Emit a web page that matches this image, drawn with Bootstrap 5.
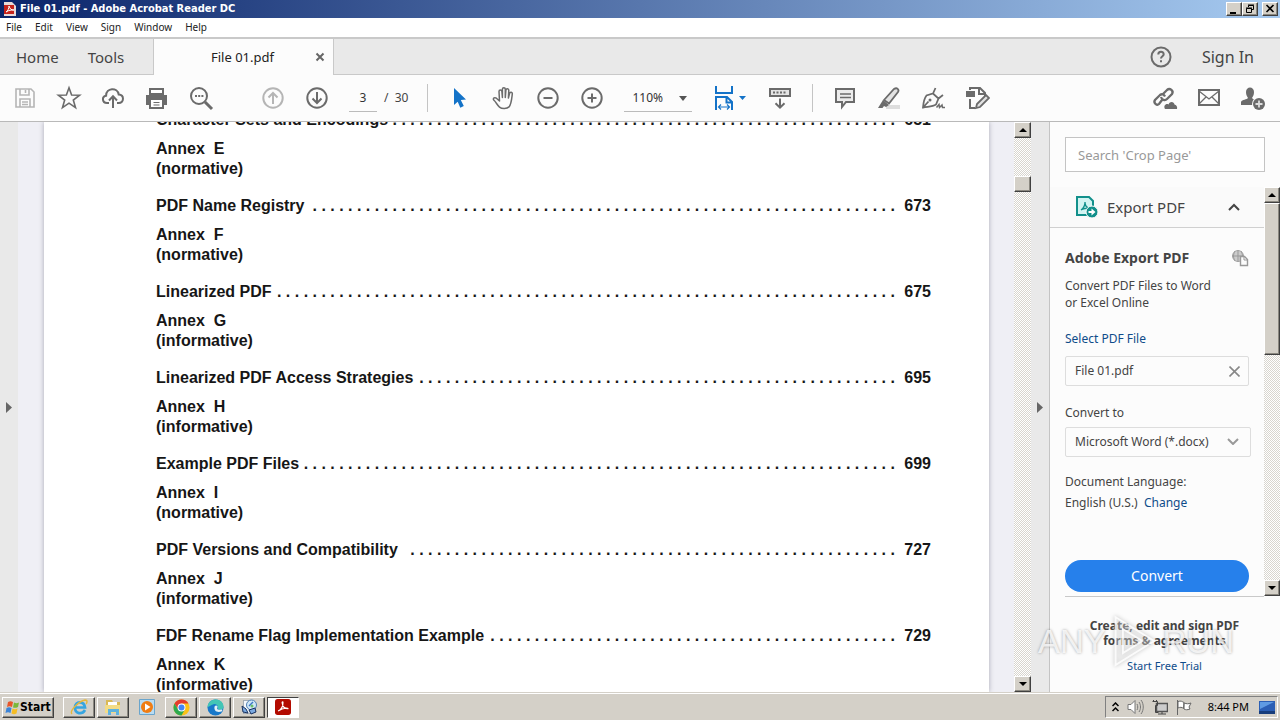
<!DOCTYPE html>
<html lang="en">
<head>
<meta charset="utf-8">
<meta name="viewport" content="width=device-width, initial-scale=1">
<title>File 01.pdf - Adobe Acrobat Reader DC</title>
<link rel="stylesheet" href="https://cdn.jsdelivr.net/npm/bootstrap@5.3.0/dist/css/bootstrap.min.css">
<style>
  body { font-family: "Noto Sans", sans-serif; font-size: 12px; line-height: 18px; color: #444; background: #fcfcfc; }
  button { border: 0; background: none; padding: 0; color: inherit; }
  a { text-decoration: none; color: #0f4c8a; }
  svg { display: block; }
  .ic { width: 26px; height: 26px; fill: none; stroke: #6b6b6b; stroke-width: 2; }
  .ic-dim { stroke: #b5b5b5; }

  .title-bar { height: 18px; padding: 0 2px 0 4px; background: linear-gradient(90deg, #0a246a, #a6caf0); color: #fff; font: bold 11px/18px "DejaVu Sans Condensed", sans-serif; }
  .raised { background: #d4d0c8; border: 1px solid; border-color: #fff #404040 #404040 #fff; box-shadow: inset -1px -1px #8b8880; }
  .win-btn { width: 16px; height: 14px; color: #000; }
  .menu-bar { height: 19px; padding-left: 6px; gap: 13px; font-size: 10px; line-height: 19px; }
  .menu-bar a { color: #222; }

  .tab-bar { height: 38px; background: #e9e9e9; border-top: 2px solid #c9c9c9; border-bottom: 1px solid #c9c9c9; font-size: 15px; }
  .tab-home { width: 154px; padding-left: 16px; gap: 29px; border-right: 1px solid #c9c9c9; }
  .tab-file { width: 179px; margin-bottom: -1px; padding: 0 8px 0 24px; background: #fcfcfc; font-size: 13px; color: #222; }
  .tab-edge { border-left: 1px solid #c9c9c9; }
  .sign { padding: 0 26px 0 19px; font-size: 16px; }

  .tool-bar { height: 47px; padding: 0 5px 0 3px; border-bottom: 1px solid #b9b9b9; }
  .tool { width: 44px; height: 36px; display: flex; align-items: center; justify-content: center; flex: none; }
  .group-gap { margin-left: 28px; }
  .mode-gap { margin-left: 6px; }
  .sep { width: 1px; height: 28px; margin: 0 10px; background: #c4c4c4; }
  .sep-wide { margin-left: 19px; }
  .under { border: 0; border-bottom: 1px solid #bbb; background: none; height: 27px; font-size: 12px; color: #333; padding: 0; border-radius: 0; }
  .page-no { width: 28px; margin: 0 7px 0 10px; text-align: center; }
  .zoom-pick { width: 68px; margin: 0 16px 0 10px; position: relative; }
  .zoom-pick select { width: 100%; padding-left: 8px; appearance: none; }
  .zoom-pick svg, .fmt svg { position: absolute; pointer-events: none; }
  .zoom-pick svg { right: 5px; top: 11px; }

  .strip { width: 18px; background: #e9e9e9; display: flex; align-items: center; justify-content: center; flex: none; }
  .canvas { background: #efeff5; padding: 0 25px 0 26px; }
  .sheet { background: #fff; padding: 0 58px 0 112px; box-shadow: 0 0 5px #a9a9b5; font: bold 16px/20px "Liberation Sans", Arial, sans-serif; color: #161616; }
  .toc { margin: -12px 0 0; padding: 0; list-style: none; height: 0; white-space: pre; }
  .toc li { margin-bottom: 17px; }
  .toc-line { display: flex; margin-bottom: 9px; }
  .dots { flex: 1; text-align: right; margin-right: 5px; overflow: hidden; }
  .scroller { flex: none; width: 16px; display: flex; flex-direction: column; background: repeating-conic-gradient(#d8d5ce 0 25%, #fff 0 50%) 0 0/2px 2px; }
  .scroller.doc { width: 17px; }
  .scroller button { height: 16px; display: flex; align-items: center; justify-content: center; }
  .thumb-sm { height: 16px; margin-top: 38px; }
  .thumb-lg { height: 152px; }

  .side { width: 231px; flex: none; border-left: 1px solid #c4c4c4; background: #fcfcfc; position: relative; }
  .search { margin: 15px; height: 35px; border: 1px solid #c4c4c4; border-radius: 0; padding: 0 12px; font-size: 13px; background: #fff; }
  .search::placeholder { color: #999; }
  .side-body { height: 409px; flex: none; }
  .side-main { width: 214px; flex: none; }
  .export-head { height: 41px; border-bottom: 1px solid #d0d0d0; padding: 0 24px 0 25px; font-size: 15px; background: #fafafa; }
  .export-form { padding: 20px 15px 4px; }
  .export-form h2 { font-size: 14px; line-height: 20px; font-weight: 700; margin: 0; }
  .desc { margin: 9px 0 19px; line-height: 17px; }
  .to-label { margin: 18px 0 5px; }
  .lang { margin-top: 14px; line-height: 21px; }
  .box { height: 30px; border: 1px solid #ddd; border-radius: 2px; background: #fcfcfc; font-size: 12px; padding: 0 8px 0 9px; flex: none; }
  .fmt { position: relative; margin-right: -2px; }
  .fmt select { appearance: none; width: 100%; color: #444; }
  .fmt svg { right: 12px; top: 11px; }
  .convert { height: 32px; background: #2680eb; color: #fff; border-radius: 16px; font-size: 14px; flex: none; }
  .promo { margin: 0 16px 0 15px; border-top: 1px solid #c9c9c9; padding-top: 21px; line-height: 15px; text-align: center; flex: 1; }
  .promo a { display: block; margin-top: 10px; font-size: 11px; }
  .wmark { position: absolute; left: -12px; bottom: 18px; width: 196px; pointer-events: none; color: rgba(255,255,255,.8); font: 33px/64px "Liberation Sans", sans-serif; text-shadow: 0 0 3px rgba(0,0,0,.35); }
  .wmark svg { flex: none; filter: drop-shadow(0 0 2px rgba(0,0,0,.3)); }

  .task-bar { height: 28px; background: #d4d0c8; box-shadow: inset 0 1px #d4d0c8, inset 0 2px #fff; padding: 4px 2px 2px; color: #000; }
  .tasks { gap: 2px; margin-left: 9px; }
  .task { width: 32px; height: 21px; display: flex; align-items: center; justify-content: center; }
  .task.active { background: #fff; border-color: #404040 #fff #fff #404040; box-shadow: none; }
  .start { width: 52px; height: 21px; padding: 0 2px; font: bold 12px/18px "DejaVu Sans Condensed", sans-serif; }
  .tray { height: 22px; padding: 0 2px 0 6px; border: 1px solid; border-color: #808080 #fff #fff #808080; font-size: 11px; gap: 8px; }
  .clock { margin: 0 2px 0 8px; }
</style>
</head>
<body class="vh-100 d-flex flex-column overflow-hidden">

<header>
  <div class="title-bar d-flex align-items-center">
    <svg width="12" height="14" viewBox="0 0 12 14"><path d="M0 0h8l4 4v10H0z" fill="#e8d9d9"/><path d="M0 3h10v9H0z" fill="#c5221b"/><path d="M2 10c2-1 3-4 3-6 1 3 2 4 5 4-3 0-5 0-8 2z" fill="none" stroke="#fff"/></svg>
    <span class="flex-grow-1 ps-1">File 01.pdf - Adobe Acrobat Reader DC</span>
    <button class="raised win-btn" aria-label="Minimize"><svg width="14" height="12"><path d="M3 9h6v2H3z"/></svg></button>
    <button class="raised win-btn me-1" aria-label="Restore"><svg width="14" height="12" fill="none" stroke="#000"><path d="M5.500 4V2.500h5v4H9M5 2h6M3.500 5.500h5v4h-5zM3 5h6"/></svg></button>
    <button class="raised win-btn" aria-label="Close"><svg width="14" height="12" stroke="#000" stroke-width="1.600"><path d="m3.500 2 7 7m0-7-7 7"/></svg></button>
  </div>
  <nav class="menu-bar d-flex bg-white"><a href="#">File</a><a href="#">Edit</a><a href="#">View</a><a href="#">Sign</a><a href="#">Window</a><a href="#">Help</a></nav>
  <nav class="tab-bar d-flex align-items-stretch">
    <div class="tab-home d-flex align-items-center"><button>Home</button><button>Tools</button></div>
    <div class="tab-file d-flex align-items-center"><span class="flex-grow-1 text-center">File 01.pdf</span>
      <button class="ms-2" aria-label="Close tab"><svg width="10" height="10" stroke="#666" stroke-width="2"><path d="m1.500 1.500 7 7m0-7-7 7"/></svg></button></div>
    <div class="tab-edge flex-grow-1 d-flex align-items-center justify-content-end">
      <button class="tool" aria-label="Help"><svg class="ic" viewBox="0 0 26 26"><circle cx="13" cy="13" r="9.500"/><path d="M10.300 10.500c0-3.500 5.400-3.500 5.400-.3 0 2-2.700 2-2.700 4.300m0 1.800v2"/></svg></button>
      <button class="sign">Sign In</button>
    </div>
  </nav>
  <div class="tool-bar d-flex align-items-center">
    <button class="tool" aria-label="Save"><svg class="ic ic-dim" viewBox="0 0 26 26"><path d="M4 4h15l3 3v15H4zM8 4v6h9V4M13.500 5v3M8 22v-8h10v8M10 17h6M10 19.500h6" stroke-width="1.600"/></svg></button>
    <button class="tool" aria-label="Star"><svg class="ic" viewBox="0 0 26 26"><path d="m13 2.800 2.600 7.200 8 .2-6.300 4.800 2.200 7.600-6.500-4.400-6.500 4.400L8.700 15 2.400 10.200l8-.2z" stroke-width="1.600"/></svg></button>
    <button class="tool" aria-label="Upload"><svg class="ic" viewBox="0 0 26 26"><path d="M9 18H7c-5 0-5.500-6.500-.9-7.300C6 2.700 17.500 2 18.700 9.500c5.800.3 5.600 8.500 0 8.500H17M13 23V11.500m-4 4 4-4.300 4 4.300"/></svg></button>
    <button class="tool" aria-label="Print"><svg class="ic" viewBox="0 0 26 26"><path d="M6 4h13v5H6z" fill="#fff"/><path d="M2 10h21v10h-4v-4H6v4H2z" fill="#6b6b6b" stroke="none"/><path d="M6 14h13v9H6z" fill="#fff"/><path d="M9.500 17.500h6M9.500 20h6" stroke-width="1.200"/></svg></button>
    <button class="tool" aria-label="Find"><svg class="ic" viewBox="0 0 26 26"><circle cx="11" cy="11" r="8"/><path d="m17 17 7 7" stroke-width="3"/><path d="M7 11h2m1.200 0h2m1.200 0h2"/></svg></button>
    <button class="tool group-gap" aria-label="Previous page"><svg class="ic ic-dim" viewBox="0 0 26 26"><circle cx="13" cy="13" r="9.700"/><path d="M13 19V8m-4.500 4.500L13 8l4.500 4.500"/></svg></button>
    <button class="tool" aria-label="Next page"><svg class="ic" viewBox="0 0 26 26"><circle cx="13" cy="13" r="9.700"/><path d="M13 7v11m-4.500-4.500L13 18l4.500-4.500"/></svg></button>
    <input class="under page-no" value="3" aria-label="Page number"><span>/&nbsp; 30</span>
    <span class="sep sep-wide"></span>
    <button class="tool" aria-label="Select"><svg class="ic" viewBox="0 0 26 26"><path d="m7 3 12 11.500-5.200.4 3 6.200-3.500 1.600-2.600-6L7 20z" fill="#1473c8" stroke="none"/></svg></button>
    <button class="tool" aria-label="Hand"><svg class="ic" viewBox="0 0 26 26" stroke-linejoin="round" stroke-linecap="round"><path d="M8.500 16 8 6.500c0-2 2.700-2 2.900 0l.5 6V4.300c0-2 2.900-2 2.900 0v8.200l.6-7.300c.2-2 2.900-1.800 2.900.2l-.4 7.600 1.200-4.600c.5-1.800 2.900-1.300 2.700.5-.8 7-1 10.500-3.300 13-2 2-7 2.300-9.500.2C6.500 20.500 5 17 2.700 15c-1-1.800 1-3 2.700-1.800L8.500 16" stroke-width="1.500"/></svg></button>
    <button class="tool" aria-label="Zoom out"><svg class="ic" viewBox="0 0 26 26"><circle cx="13" cy="13" r="9.700"/><path d="M8.500 13h9"/></svg></button>
    <button class="tool" aria-label="Zoom in"><svg class="ic" viewBox="0 0 26 26"><circle cx="13" cy="13" r="9.700"/><path d="M8.500 13h9M13 8.500v9"/></svg></button>
    <div class="zoom-pick"><select class="under" aria-label="Zoom level"><option>110%</option></select><svg width="8" height="5"><path d="M0 0h8L4 5z" fill="#555"/></svg></div>
    <button class="tool" aria-label="Fit width"><svg width="32" height="26" viewBox="0 0 32 26" fill="none" stroke="#1473c8" stroke-width="2"><path d="M2 1v7h16V1M2 25V12h11l5 5v8M12.500 12v5.500H18"/><path d="M5 22h10M7 19.500 4.500 22 7 24.500M13 19.500l2.500 2.500-2.500 2.500" stroke-width="1.200"/><path d="M25 11h7l-3.500 4z" fill="#1473c8" stroke="none"/></svg></button>
    <button class="tool mode-gap" aria-label="Page display"><svg class="ic" viewBox="0 0 26 26"><path d="M3 4h20v7H3z" fill="#e3e3e3"/><path d="M6 7.500h14" stroke-dasharray="2 1.500"/><path d="M13 13.500v9m-4.500-4.300L13 22.700l4.500-4.500"/></svg></button>
    <span class="sep"></span>
    <button class="tool" aria-label="Comment"><svg class="ic" viewBox="0 0 26 26"><path d="M4 4h18v13h-8l-4 5v-5H4z" fill="#ececec"/><path d="M8 9h11M8 12.500h11" stroke-width="1.400"/></svg></button>
    <button class="tool" aria-label="Highlight"><svg class="ic" viewBox="0 0 26 26"><path d="M10 20h14v4H10z" fill="#ddd" stroke="none"/><path d="m8 15 10-11c3-2 5.500.5 4 3L13 18.500z" fill="#e3e3e3" stroke-width="1.800"/><path d="m7 15 6 5-3 2-2-1-1.500 2H2z" fill="#6b6b6b" stroke="none"/></svg></button>
    <button class="tool" aria-label="Sign"><svg class="ic" viewBox="0 0 26 26"><path d="M3 22.500c.5-6 1.500-9.500 3.500-12L13 8.500l5.500 5-2.500 6C12.500 22 8 21.500 3 22.500zm0 0 5.500-6M13 8.500 15.500 3M18.500 13.500 23 10" stroke-width="1.800"/><circle cx="10" cy="15" r="1.500" fill="#6b6b6b" stroke="none"/><path d="m16.500 22.500 2.500-3 .5 3 2.500-2.500.5 2.500H25" stroke-width="1.500"/></svg></button>
    <button class="tool" aria-label="Edit"><svg class="ic" viewBox="0 0 26 26"><path d="M2 6h9v6H2z" fill="#6b6b6b" stroke="none"/><path d="M6 5V3h10l5 5v3M15 3v6h6M6 14v9h5"/><path d="m12 23 1-4 9-9 3 3-9 9z" fill="#e3e3e3" stroke-width="1.800"/></svg></button>
    <span class="flex-grow-1"></span>
    <button class="tool" aria-label="Share link"><svg class="ic" viewBox="0 0 26 26"><path d="m10 15-3 4c-2 2-6-1-4-4l5-5c2-1.500 4-.5 5 1.500M9 12c1 3 4 4 6 2l5-5c2-3-2-6.500-5-4l-4 4" stroke-width="2.300"/><path d="M13 24c-2-3 1-6 3.500-4.500C18 16 22 16.500 22.500 19.500c2.500.5 3 3 2.500 4.500z" fill="#6b6b6b" stroke="none"/></svg></button>
    <button class="tool" aria-label="Mail"><svg class="ic" viewBox="0 0 26 26"><path d="M3 5h20v15H3z"/><path d="m3 6 10 8 10-8M3 19l7-7m13 7-7-7" stroke-width="1.300"/></svg></button>
    <button class="tool" aria-label="Add person"><svg class="ic" viewBox="0 0 26 26"><g fill="#6b6b6b" stroke="none"><path d="M6 7c0-6 8-6 8 0 0 3-1 4-2 6 1 2 4 1.500 5 3l-2 4H1v-3c1-3 6-2 7-4-1-2-2-3-2-6z"/><circle cx="19" cy="19" r="7" fill="#fcfcfc"/><circle cx="19" cy="19" r="6"/></g><path d="M15.500 19h7M19 15.500v7" stroke="#ddd" stroke-width="1.800"/></svg></button>
  </div>
</header>

<main class="d-flex flex-grow-1 overflow-hidden">
  <button class="strip" aria-label="Show navigation pane"><svg width="6" height="11"><path d="M0 0v11l6-5.500z" fill="#666"/></svg></button>
  <section class="canvas flex-grow-1 d-flex overflow-hidden"><article class="sheet flex-grow-1"><ul class="toc" id="toc"></ul></article></section>
  <div class="scroller doc">
    <button class="raised" aria-label="Scroll up"><svg width="8" height="4"><path d="M0 4h8L4 0z"/></svg></button>
    <div class="raised thumb-sm"></div>
    <button class="raised mt-auto" aria-label="Scroll down"><svg width="8" height="4"><path d="M0 0h8L4 4z"/></svg></button>
  </div>
  <button class="strip" aria-label="Hide tools pane"><svg width="6" height="11"><path d="M0 0v11l6-5.500z" fill="#666"/></svg></button>
  <aside class="side d-flex flex-column">
    <input class="search" placeholder="Search 'Crop Page'" aria-label="Search tools">
    <div class="side-body d-flex">
      <div class="side-main d-flex flex-column">
        <div class="export-head d-flex align-items-center">
          <svg width="24" height="24" viewBox="0 0 24 24" fill="none" stroke="#12908b" stroke-width="2"><path d="M2 2h12l4 4v14H2z" fill="#d2f4f2"/><path d="M6 15c3-2 4-5 4-8 0 4 2 6 5 6-4 0-6 0-9 2z" stroke-width="1.300"/><circle cx="17" cy="17" r="6" fill="#12908b" stroke="#fafafa" stroke-width="1"/><path d="M13.500 16h3v-2.500l4 3.500-4 3.500V18h-3z" fill="#fff" stroke="none"/></svg>
          <span class="flex-grow-1 ps-2">Export PDF</span>
          <button aria-label="Collapse"><svg width="12" height="8" fill="none" stroke="#444" stroke-width="2"><path d="m1 7 5-5 5 5"/></svg></button>
        </div>
        <form class="export-form flex-grow-1 d-flex flex-column" onsubmit="return false">
          <div class="d-flex justify-content-between align-items-center"><h2>Adobe Export PDF</h2>
            <svg width="17" height="17" viewBox="0 0 17 17" fill="none" stroke="#aaa"><circle cx="6" cy="6" r="5.500" fill="#ccc"/><path d="M0 6h12M6 0v12M3 1c-2 4-2 6 0 10M9 1c2 4 2 6 0 10" stroke="#999"/><path d="M8.500 6.500h4l3 3v6h-7z" fill="#fcfcfc" stroke="#999" stroke-width="1.400"/><path d="M12 7v3h3" stroke="#999"/></svg></div>
          <p class="desc">Convert PDF Files to Word<br>or Excel Online</p>
          <a href="#" class="mb-2">Select PDF File</a>
          <div class="box d-flex align-items-center"><span class="flex-grow-1">File 01.pdf</span><button type="button" aria-label="Remove file"><svg width="11" height="11" stroke="#888" stroke-width="1.600"><path d="m.5.5 10 10m0-10-10 10"/></svg></button></div>
          <label for="fmt" class="to-label">Convert to</label>
          <div class="fmt"><select class="box" id="fmt"><option>Microsoft Word (*.docx)</option></select><svg width="12" height="7" fill="none" stroke="#999" stroke-width="2"><path d="m1 1 5 5 5-5"/></svg></div>
          <div class="lang">Document Language:<br>English (U.S.)&nbsp; <a href="#">Change</a></div>
          <button class="convert mt-auto">Convert</button>
        </form>
      </div>
      <div class="scroller">
        <button class="raised" aria-label="Panel up"><svg width="8" height="4"><path d="M0 4h8L4 0z"/></svg></button>
        <div class="raised thumb-lg"></div>
        <button class="raised mt-auto" aria-label="Panel down"><svg width="8" height="4"><path d="M0 0h8L4 4z"/></svg></button>
      </div>
    </div>
    <div class="promo"><b>Create, edit and sign PDF<br>forms &amp; agreements</b><a href="#">Start Free Trial</a></div>
    <div class="wmark d-flex align-items-center justify-content-between"><span>ANY</span><svg width="48" height="62" viewBox="0 0 52 62" fill="rgba(255,255,255,.35)" stroke="rgba(255,255,255,.8)" stroke-width="2"><path d="M6 4v52l42-26z"/><path d="M14 17v26l21-13z" fill="none"/></svg><span>RUN</span></div>
  </aside>
</main>

<footer class="task-bar d-flex align-items-center">
  <button class="raised start d-flex align-items-center"><svg width="15" height="15" viewBox="0 0 15 15" class="flex-shrink-0"><path d="M3 2c2-1 3-1 5 0L7 7C5 6 4 6 2 7z" fill="#e8562a"/><path d="M9 2.500c2 1 3 1 5 0L13 7c-2 1-3 1-5 .5z" fill="#7ab83a"/><path d="M1.500 8c2-1 3-1 5 0l-1 5c-2-1-3-1-5 0z" fill="#3b84d8"/><path d="M7.500 8.500c2 1 3 1 5 0l-1 5c-2 1-3 1-5 0z" fill="#f5bd24"/></svg><span>Start</span></button>
  <div class="tasks d-flex">
    <button class="raised task" aria-label="Internet Explorer"><svg width="18" height="18" viewBox="0 0 18 18" fill="none"><path d="M15 12c-3 5-10 4-10-2.500s9-7 10 0H6" stroke="#36a5e0" stroke-width="2.700"/><path d="M2 16c-3-3 7-13 13-14 3 0 2 3 1 4" stroke="#e5b73b" stroke-width="1.400"/></svg></button>
    <button class="raised task" aria-label="Explorer"><svg width="18" height="18" viewBox="0 0 18 18"><path d="M2 2h6l1 2h7v11H2z" fill="#d9b955"/><path d="M4 4h9v3H4z" fill="#fff"/><path d="M1 7h15v8H1z" fill="#f3dc86"/><path d="M4 17v-6h11v6h-3v-3H7v3z" fill="#5fb3de"/></svg></button>
    <button class="task" aria-label="Media player"><svg width="16" height="16" viewBox="0 0 16 16"><path d="M.5.500h15v15H.5z" fill="#b9dcf2" stroke="#6aa5cc"/><circle cx="8" cy="8" r="6" fill="#f07d13"/><path d="M6 4.500v7L11.500 8z" fill="#fff"/></svg></button>
    <button class="raised task" aria-label="Chrome"><svg width="17" height="17" viewBox="0 0 18 18"><circle cx="9" cy="9" r="8.500" fill="#fbc116"/><path d="M1.600 4.800A8.500 8.500 0 0 1 16.400 4.800H9L5.400 11z" fill="#e33b2e"/><path d="M1.600 4.800A8.500 8.500 0 0 0 9 17.500L12.600 11H5.400z" fill="#2da94f"/><circle cx="9" cy="9" r="4.200" fill="#fff"/><circle cx="9" cy="9" r="3.200" fill="#4285f4"/></svg></button>
    <button class="raised task" aria-label="Edge"><svg width="17" height="17" viewBox="0 0 18 18"><circle cx="9" cy="9" r="8.500" fill="#1878c9"/><path d="M.5 9C1-2 17-2 17.500 8c0 4-5 4-6 2 1-4-3-6-6-4S1 8 .5 9z" fill="#43c5b5"/><path d="M8 8c-1 5 3 7 8 5 0-1 1-2-1-2-3 1-5 0-4-2 1-2-2-3-3-1z" fill="#e4f1f6"/></svg></button>
    <button class="raised task" aria-label="Utility"><svg width="18" height="18" viewBox="0 0 18 18"><path d="M3.500 2.500h8v13h-8z" fill="#f4f8fc" stroke="#678" stroke-dasharray="1 1"/><circle cx="11.500" cy="7" r="5" fill="#cfe7f7" stroke="#4f7fb5"/><path d="m2 8 4 3 2 4-5-1zM9 12l6-2 1 4-5 2z" fill="#7aa9e0" stroke="#17305e"/><path d="m9 8 4-4" stroke="#3e77c5" stroke-width="1.500"/><circle cx="12" cy="8" r="1.500" fill="#6bbf69"/></svg></button>
    <button class="raised task active" aria-label="Acrobat Reader"><svg width="16" height="16" viewBox="0 0 18 18"><rect width="18" height="18" rx="3" fill="#b30b00"/><path d="M3.500 13.500C7 12 9 8 9 4c0-1.500-1-1-1 0 .5 4 3 7 6.500 7 1-1-4-2-11 2.500z" fill="none" stroke="#fff" stroke-width="1.300"/></svg></button>
  </div>
  <div class="tray d-flex align-items-center ms-auto">
    <svg width="7" height="10" fill="none" stroke="#000" stroke-width="1.500"><path d="m.5 4 3-3 3 3m-6 5 3-3 3 3"/></svg>
    <svg width="17" height="16" viewBox="0 0 17 16" fill="none" stroke="#777"><path d="M1 5.500h3l4-4v13l-4-4H1z" fill="#fff"/><path d="M10 5c1 2 1 4 0 6m2-8c2 3 2 7 0 10m2-12c3 4 3 10 0 14"/></svg>
    <svg width="16" height="15" viewBox="0 0 16 15" fill="none" stroke="#555"><path d="M4.500 3.500h11v8h-11z" fill="#ccc" stroke-width="1.500"/><path d="M6 14h8M10 12v2M.5 1.500h5v4h-2v7h3M1.500 0v2M4.500 0v2" stroke="#444"/></svg>
    <svg width="16" height="15" viewBox="0 0 16 15" fill="#fff" stroke="#666"><path d="M1.500 0v15M2 1.500c3-1 4 0 6 1l-.5 6C6 7 4 7 2 8zM8 3c3 1 4 1 7 0l-2 4 1 2c-3 1-4 1-6 0z"/></svg>
    <span class="clock">8:44 PM</span>
    <svg width="16" height="13" viewBox="0 0 16 13"><path d="M0 0h16v11H0z" fill="#2b5fb5"/><path d="M1 1h14L1 8z" fill="#5f9be3"/><path d="M0 10h16v3H0z" fill="#173d7c"/></svg>
  </div>
</footer>

<script>
  // Table of contents: title, number of leader dots, page, annex letter, kind
  const entries = [
    ["Character Sets and Encodings", 57, 651, "E", "normative"],
    ["PDF Name Registry", 66, 673, "F", "normative"],
    ["Linearized PDF", 70, 675, "G", "informative"],
    ["Linearized PDF Access Strategies", 54, 695, "H", "informative"],
    ["Example PDF Files", 67, 699, "I", "normative"],
    ["PDF Versions and Compatibility", 55, 727, "J", "informative"],
    ["FDF Rename Flag Implementation Example", 46, 729, "K", "informative"]
  ];
  document.getElementById("toc").innerHTML = entries.map(([t, n, p, a, k]) =>
    `<li><div class="toc-line"><span>${t}</span><span class="dots">${". ".repeat(n)}</span><span>${p}</span></div>Annex  ${a}\n(${k})</li>`).join("");
</script>
<script src="https://cdn.jsdelivr.net/npm/bootstrap@5.3.0/dist/js/bootstrap.bundle.min.js"></script>
</body>
</html>
